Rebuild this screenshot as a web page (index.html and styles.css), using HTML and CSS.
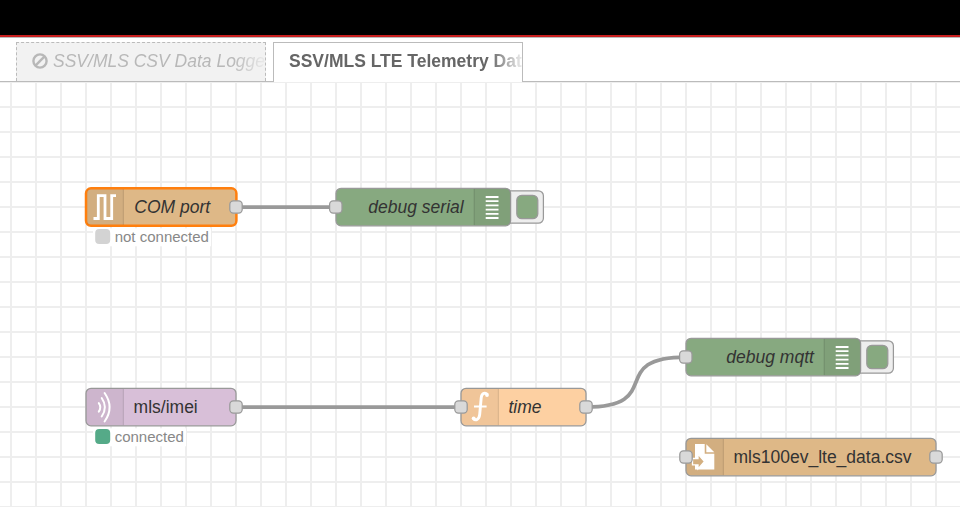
FILE: index.html
```html
<!DOCTYPE html>
<html lang="en">
<head>
<meta charset="utf-8">
<title>Flow editor</title>
<link rel="stylesheet" href="styles.css">
</head>
<body>
<header class="header"></header>
<nav class="tabs">
  <div class="tab tab-disabled">
    <svg class="ban" viewBox="0 0 16 16"><circle cx="8" cy="8" r="6.6"/><path d="M3.4 12.6 12.6 3.4"/></svg>
    <span class="tab-label">SSV/MLS CSV Data Logger</span>
  </div>
  <div class="tab tab-active"><span class="tab-label">SSV/MLS LTE Telemetry Data</span></div>
</nav>
<main class="workspace">
<svg class="flow" width="960" height="425" viewBox="0 82 960 425">
  <defs>
    <pattern id="grid" x="10" y="81" width="25" height="25" patternUnits="userSpaceOnUse">
      <path class="grid" d="M0 0H25V2H2V25H0Z"/>
    </pattern>
    <g id="port"><rect class="port" x="-6.2" y="-6.2" width="12.4" height="12.4" rx="3.6"/></g>
    <g id="debug">
      <rect class="button-back" x="165" y="2.500" width="42.400" height="32.400" rx="5"/>
      <rect class="button" x="180.800" y="7" width="21" height="23.400" rx="5"/>
      <rect class="green" width="174.600" height="37.500" rx="5"/>
      <path class="shade" d="M138 .5H170Q174.500 .5 174.500 5V32.500Q174.500 37 170 37H138Z"/>
      <path class="divider" d="M138.200 .7V36.800"/>
      <path class="bars" d="M149.700 8.700h12.800M149.700 12.900h12.800M149.700 17.100h12.800M149.700 21.300h12.800M149.700 25.500h12.800M149.700 29.700h12.800"/>
      <use href="#port" x="-.2" y="18.700"/>
    </g>
  </defs>
  <rect y="82" width="960" height="425" fill="url(#grid)"/>

  <path class="wire" d="M236 207H336M236 407H461M586 407C666 407 606 357 686 357"/>

  <g transform="translate(86 188.300)">
    <rect class="selected" width="150.400" height="37.500" rx="5"/>
    <path class="shade" d="M1 1H37.500V36.500H1Z"/>
    <path class="divider" d="M37.400 1V36.500"/>
    <path class="serial" d="M7.500 30.200H12.300V7.300H19V30.200H25.700V7.300H30"/>
    <text class="label italic" x="48.300" y="24.500">COM port</text>
    <use href="#port" x="150" y="18.700"/>
    <rect class="halo" x="7" y="40" width="118" height="18"/>
    <rect class="dot-grey" x="9.200" y="40.700" width="15" height="15" rx="4"/>
    <text class="status" x="28.700" y="53.700">not connected</text>
  </g>

  <g transform="translate(336 188.300)">
    <use href="#debug"/>
    <text class="label italic" x="32.300" y="24.500">debug serial</text>
  </g>

  <g transform="translate(86 388.300)">
    <rect class="mqtt" width="150" height="37.500" rx="5"/>
    <path class="shade" d="M5 .5H37.500V37H5Q.5 37 .5 32.500V5Q.5 .5 5 .5Z"/>
    <path class="divider" d="M37.400 .7V36.800"/>
    <path class="wave" d="M12.800 14.800Q15.800 19 12.800 23.300M15.700 9.700Q22.100 19 15.700 28.200M18.600 4.700Q28.600 19 18.600 33.200"/>
    <text class="label" x="47.600" y="24.500">mls/imei</text>
    <use href="#port" x="150" y="18.700"/>
    <rect class="halo" x="7" y="40" width="93" height="18"/>
    <rect class="dot-green" x="9.200" y="40.700" width="15" height="15" rx="4"/>
    <text class="status" x="28.700" y="53.700">connected</text>
  </g>

  <g transform="translate(461 388.300)">
    <rect class="function" width="125" height="37.500" rx="5"/>
    <path class="shade" d="M5 .5H37.500V37H5Q.5 37 .5 32.500V5Q.5 .5 5 .5Z"/>
    <path class="divider" d="M37.400 .7V36.800"/>
    <path class="function-mark" d="M26.400 6.200C24.500 4 20.800 4.300 20.200 9.500L18.700 26C18 31.800 14.500 32.500 12.300 30.400"/>
    <path class="function-bar" d="M13 18.200H25.600"/>
    <circle class="white" cx="26" cy="6.700" r="1.900"/>
    <circle class="white" cx="12.700" cy="30" r="1.900"/>
    <text class="label italic" x="47.500" y="24.500">time</text>
    <use href="#port" x="0" y="18.700"/>
    <use href="#port" x="125" y="18.700"/>
  </g>

  <g transform="translate(686 338.300)">
    <use href="#debug"/>
    <text class="label italic" x="40.300" y="24.500">debug mqtt</text>
  </g>

  <g transform="translate(686 438.300)">
    <rect class="file" width="250" height="37.500" rx="5"/>
    <path class="shade" d="M5 .5H37.500V37H5Q.5 37 .5 32.500V5Q.5 .5 5 .5Z"/>
    <path class="divider" d="M37.400 .7V36.800"/>
    <path class="white" d="M9 5.700H18.700V15.500H28.300V31.300H9Z"/>
    <path class="white" d="M20.300 6 28.300 14H20.300Z"/>
    <path class="arrow" d="M6.500 20.200H12V15.800L18.500 23.200 12 30.600V26.600H6.500Z"/>
    <text class="label" x="47.500" y="24.500">mls100ev_lte_data.csv</text>
    <use href="#port" x="0" y="18.700"/>
    <use href="#port" x="250" y="18.700"/>
  </g>
</svg>
</main>
</body>
</html>
```
FILE: styles.css
```css
* { box-sizing: border-box; }
body {
  margin: 0;
  width: 960px;
  height: 507px;
  overflow: hidden;
  background: #fff;
  font-family: "Liberation Sans", Arial, sans-serif;
}
.header {
  height: 37px;
  background: #000;
  border-bottom: 2px solid #c91f1f;
}
.tabs {
  display: flex;
  gap: 7px;
  height: 45px;
  padding: 4px 16px 0;
  border-top: 1px solid #bbb;
  border-bottom: 1px solid #bbb;
}
.tab {
  display: flex;
  align-items: center;
  width: 250px;
  height: 39px;
  padding: 0 0 2px 15px;
  overflow: hidden;
  white-space: nowrap;
  font-size: 17.5px;
  border: 1px solid #bbb;
  border-bottom: 0;
}
.tab-label {
  flex: 1;
  overflow: hidden;
  -webkit-mask-image: linear-gradient(to right, #000 calc(100% - 32px), rgba(0,0,0,.12));
  mask-image: linear-gradient(to right, #000 calc(100% - 32px), rgba(0,0,0,.12));
}
.tab-disabled {
  color: #b8b8b8;
  background: #f2f2f2;
  border-style: dashed;
  font-style: italic;
}
.tab-active {
  height: 41px;
  padding-bottom: 3px;
  color: #666;
  background: #fff;
  font-weight: bold;
}
.ban {
  flex: none;
  width: 16px;
  height: 16px;
  margin: 0 5px 1px 0;
  fill: none;
  stroke: #b8b8b8;
  stroke-width: 2.4;
}
.flow { display: block; }
.grid { fill: #eee; }
.wire { fill: none; stroke: #999; stroke-width: 3.75; }
.port { fill: #d9d9d9; stroke: #999; stroke-width: 1.25; }
.green, .mqtt, .function, .file { stroke: #999; stroke-width: 1.3; }
.green { fill: #87a980; }
.mqtt { fill: #d8bfd8; }
.function { fill: #fdd0a2; }
.file { fill: #deb887; }
.selected { fill: #deb887; stroke: #ff7f0e; stroke-width: 2.5; }
.shade { fill: #000; fill-opacity: .05; }
.divider { stroke: #000; stroke-opacity: .1; stroke-width: 1.25; }
.bars { stroke: #fff; stroke-width: 1.8; }
.button-back { fill: #eee; stroke: #999; stroke-width: 1.25; }
.button { fill: #87a980; stroke: #999; stroke-width: 1.25; }
.serial { fill: none; stroke: #fff; stroke-width: 2.8; }
.wave { fill: none; stroke: #fff; stroke-width: 2; stroke-linecap: round; }
.function-mark { fill: none; stroke: #fff; stroke-width: 2.9; }
.function-bar { stroke: #fff; stroke-width: 2; }
.white { fill: #fff; }
.arrow { fill: #d3af80; stroke: #fff; stroke-width: 1.3; }
.label { fill: #333; font-size: 17.5px; }
.italic { font-style: italic; }
.status { fill: #888; font-size: 15px; }
.halo { fill: #fff; }
.dot-grey { fill: #d3d3d3; }
.dot-green { fill: #5a8; }
```
